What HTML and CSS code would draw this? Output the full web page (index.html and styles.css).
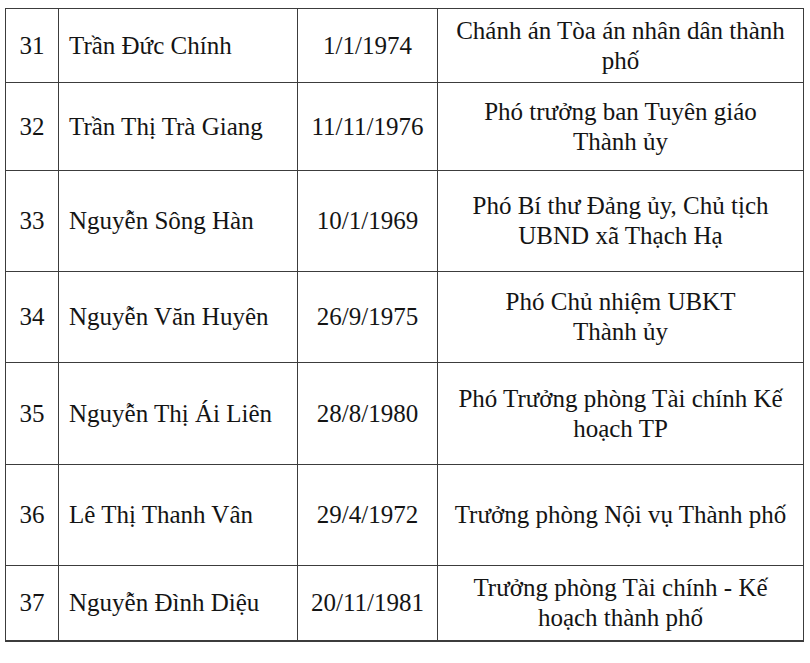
FILE: index.html
```html
<!DOCTYPE html>
<html>
<head>
<meta charset="utf-8">
<title>Danh sách</title>
<link rel="stylesheet" href="styles.css">
</head>
<body>
<div class="list">
  <div class="cell no">31</div>
  <div class="cell name">Trần Đức Chính</div>
  <div class="cell date">1/1/1974</div>
  <div class="cell role">Chánh án Tòa án nhân dân thành<br>phố</div>

  <div class="cell no">32</div>
  <div class="cell name">Trần Thị Trà Giang</div>
  <div class="cell date">11/11/1976</div>
  <div class="cell role">Phó trưởng ban Tuyên giáo<br>Thành ủy</div>

  <div class="cell no">33</div>
  <div class="cell name">Nguyễn Sông Hàn</div>
  <div class="cell date">10/1/1969</div>
  <div class="cell role">Phó Bí thư Đảng ủy, Chủ tịch<br>UBND xã Thạch Hạ</div>

  <div class="cell no">34</div>
  <div class="cell name">Nguyễn Văn Huyên</div>
  <div class="cell date">26/9/1975</div>
  <div class="cell role">Phó Chủ nhiệm UBKT<br>Thành ủy</div>

  <div class="cell no">35</div>
  <div class="cell name">Nguyễn Thị Ái Liên</div>
  <div class="cell date">28/8/1980</div>
  <div class="cell role">Phó Trưởng phòng Tài chính Kế<br>hoạch TP</div>

  <div class="cell no">36</div>
  <div class="cell name">Lê Thị Thanh Vân</div>
  <div class="cell date">29/4/1972</div>
  <div class="cell role">Trưởng phòng Nội vụ Thành phố</div>

  <div class="cell no last">37</div>
  <div class="cell name last">Nguyễn Đình Diệu</div>
  <div class="cell date last">20/11/1981</div>
  <div class="cell role last">Trưởng phòng Tài chính - Kế<br>hoạch thành phố</div>
</div>
</body>
</html>
```

FILE: styles.css
```css
html, body {
  margin: 0;
  padding: 0;
  background: #ffffff;
}

body {
  font-family: "Liberation Serif", serif;
  font-size: 25px;
  color: #141414;
}

.list {
  display: grid;
  grid-template-columns: 53px 239px 140px 366px;
  grid-template-rows: 74px 88px 101px 91px 102px 101px 76px;
  width: max-content;
  margin: 8px 0 0 5px;
  border-top: 1px solid #3c3c3c;
  border-left: 1px solid #3c3c3c;
}

.cell {
  box-sizing: border-box;
  display: flex;
  flex-direction: column;
  justify-content: center;
  border-right: 1px solid #3c3c3c;
  border-bottom: 1px solid #3c3c3c;
  font-size: 25px;
  line-height: 30px;
  white-space: nowrap;
  text-align: center;
}

.cell.last {
  border-bottom: 2px solid #3c3c3c;
}

.name {
  text-align: left;
  padding-left: 10px;
}
```
